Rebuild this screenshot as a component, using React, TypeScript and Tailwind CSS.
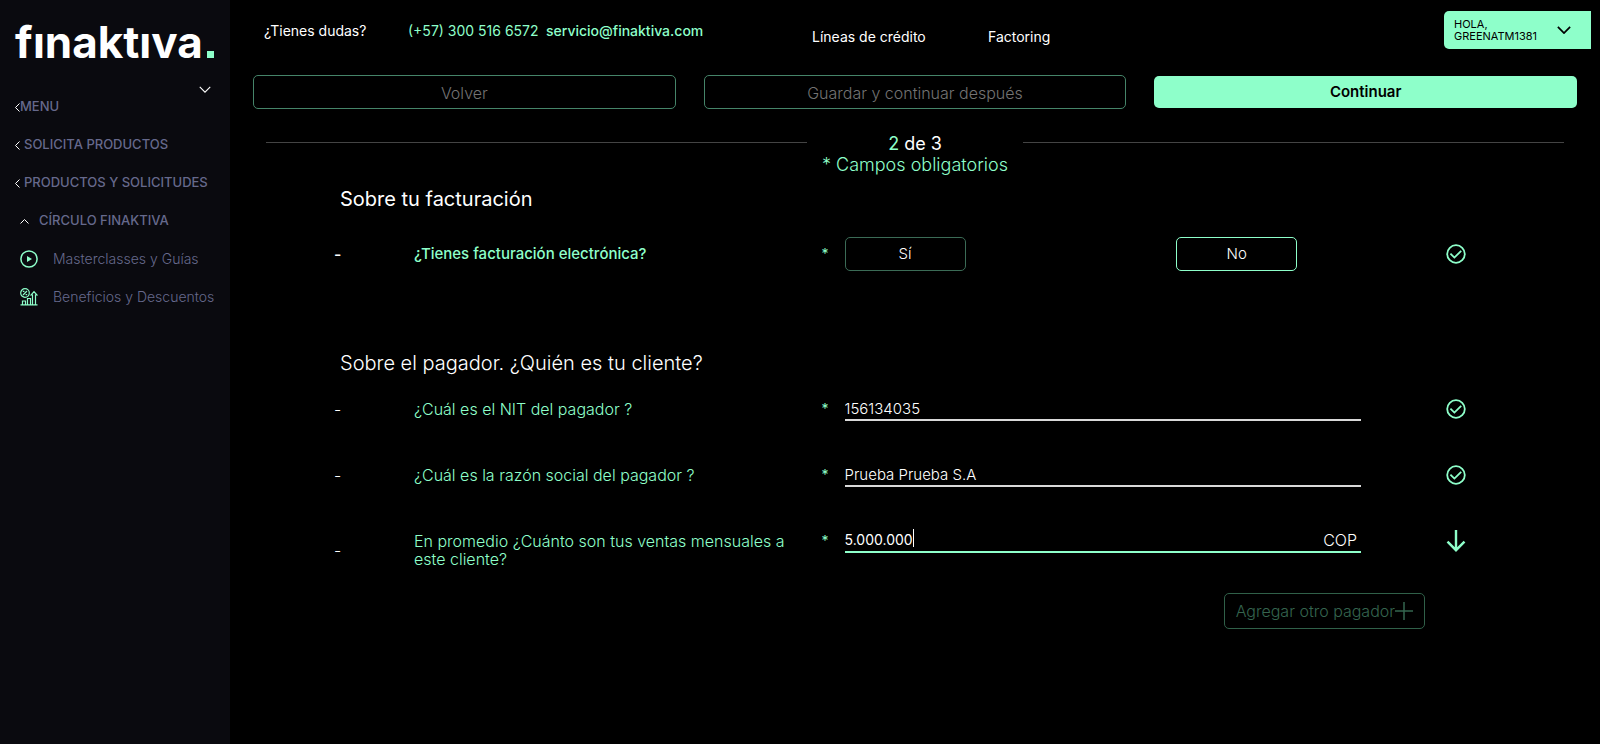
import { useState, type ReactNode } from 'react';

function Chevron({ className, d = 'M1 1l7 7 7-7', box = '0 0 16 9', w = 2 }: { className: string; d?: string; box?: string; w?: number }) {
  return (
    <svg className={className} viewBox={box} fill="none" stroke="currentColor" strokeWidth={w} aria-hidden="true">
      <path d={d} />
    </svg>
  );
}

function CheckIcon() {
  return (
    <svg className="h-5 w-5" viewBox="0 0 20 20" fill="none" stroke="currentColor" strokeWidth="1.8" aria-hidden="true">
      <circle cx="10" cy="10" r="8.8" />
      <path d="M4.400 9.600l4 4 6.800-6.800" />
    </svg>
  );
}

function ArrowDownIcon() {
  return (
    <svg className="h-[22px] w-5" viewBox="0 0 20 22" fill="none" stroke="currentColor" strokeWidth="2.4" aria-hidden="true">
      <path d="M10 0v20.200M1.500 11.600l8.500 8.600 8.500-8.600" />
    </svg>
  );
}

function PlayIcon() {
  return (
    <svg className="h-[18px] w-[18px]" viewBox="0 0 18 18" fill="none" stroke="currentColor" strokeWidth="1.5" aria-hidden="true">
      <circle cx="9" cy="9" r="8.1" />
      <path d="M7 6l5 3-5 3z" fill="currentColor" stroke="none" />
    </svg>
  );
}

function BenefitsIcon() {
  return (
    <svg className="h-[18px] w-[18px]" viewBox="0 0 18 18" fill="none" stroke="currentColor" strokeWidth="1.2" aria-hidden="true">
      <circle cx="5" cy="5" r="4.3" />
      <path d="M3 7l4-4M2.800 3.400h1.600M5.600 6.600h1.600M0.500 16.800h17M2.500 16.500v-3.500h3v3.500M7.500 16.500v-6h3v6M12.500 16.500V7h-1.400l2.900-3.400L16.900 7h-1.400v9.500" />
    </svg>
  );
}

function SideLink({ children }: { children: ReactNode }) {
  return (
    <a href="#" className="flex h-[38px] items-center gap-1 text-[13px] font-medium">
      <Chevron className="h-[9px] w-[5px] text-white" box="0 0 5 9" d="M4.500 .5l-4 4 4 4" w={1} />
      {children}
    </a>
  );
}

function Row({ label, id, done = true, bold = false, children }: { label: string; id: string; done?: boolean; bold?: boolean; children: ReactNode }) {
  return (
    <div className="grid grid-cols-[80px_408fr_23px_517fr_190px] items-start">
      <span className={bold ? 'self-center text-base font-medium text-white' : 'self-center text-base font-light text-white'}>-</span>
      <label
        id={`${id}-label`}
        htmlFor={id}
        className={bold ? 'py-[9px] pr-8 text-[15px] leading-[18px] font-medium' : 'py-[9px] pr-8 text-base leading-[18px] font-light'}
      >
        {label}
      </label>
      <span className="flex h-9 items-center text-sm">*</span>
      <div className="flex h-9 items-center">{children}</div>
      <span className="flex h-9 items-center justify-center">{done ? <CheckIcon /> : <ArrowDownIcon />}</span>
    </div>
  );
}

export default function App() {
  const [electronic, setElectronic] = useState(false);
  const choice = 'h-[34px] w-[121px] rounded-[5px] border text-[15px] font-light text-white';
  return (
    <div className="flex min-h-screen bg-black font-['Inter',sans-serif] text-[#8effca]">
      <aside className="flex w-[230px] shrink-0 flex-col bg-[#0a0a0f] px-[15px] text-[#66698c]">
        <a href="#" className="flex items-baseline gap-1 pt-[14px] text-[44px] leading-[56px] font-bold text-white">
          fınaktıva
          <span className="h-[7px] w-[7px] bg-[#8effca]" />
        </a>
        <button type="button" aria-label="Contraer" className="mt-4 mr-1 self-end text-white">
          <Chevron className="h-[7px] w-3" w={1.5} />
        </button>
        <nav className="flex flex-col">
          <a href="#" className="mb-[5px] flex h-[28px] items-center text-[13px] font-medium">
            <Chevron className="h-[9px] w-[5px] text-white" box="0 0 5 9" d="M4.500 .5l-4 4 4 4" w={1} />
            MENU
          </a>
          <SideLink>SOLICITA PRODUCTOS</SideLink>
          <SideLink>PRODUCTOS Y SOLICITUDES</SideLink>
          <a href="#" className="flex h-[38px] items-center gap-[10px] pl-[5px] text-[13px] font-medium">
            <Chevron className="h-[5px] w-[9px] text-white" box="0 0 9 5" d="M.5 4.500l4-4 4 4" w={1} />
            CÍRCULO FINAKTIVA
          </a>
          <a href="#" className="flex h-[38px] items-center gap-[15px] pl-[5px] text-sm font-light whitespace-nowrap">
            <span className="text-[#8effca]"><PlayIcon /></span>
            Masterclasses y Guías
          </a>
          <a href="#" className="flex h-[38px] items-center gap-[15px] pl-[5px] text-sm font-light whitespace-nowrap">
            <span className="text-[#8effca]"><BenefitsIcon /></span>
            Beneficios y Descuentos
          </a>
        </nav>
      </aside>

      <main className="min-w-0 flex-1">
        <header className="flex h-[75px] items-start pt-[11px] pr-[9px] pl-[34px] text-sm">
          <div className="flex flex-[548] pt-[10px]">
            <span className="w-[144px] text-white">¿Tienes dudas?</span>
            <a href="tel:+573005166572" className="w-[138px]">(+57) 300 516 6572</a>
            <a href="mailto:servicio@finaktiva.com" className="font-medium">servicio@finaktiva.com</a>
          </div>
          <nav className="flex flex-[632] pt-4 text-white">
            <a href="#" className="w-[176px]">Líneas de crédito</a>
            <a href="#">Factoring</a>
          </nav>
          <button type="button" className="flex h-[38px] w-[147px] items-center justify-between rounded-l-[5px] bg-[#8effca] pr-5 pl-[10px] text-left text-[11px] leading-3 text-black">
            <span>HOLA,<br />GREENATM1381</span>
            <Chevron className="h-2 w-[14px]" />
          </button>
        </header>

        <div className="grid grid-cols-3 items-center gap-7 px-[23px] text-base">
          <button type="button" className="h-[34px] rounded-[5px] border border-[#458469] pt-px font-light text-[#737373]">Volver</button>
          <button type="button" className="h-[34px] rounded-[5px] border border-[#458469] pt-px font-light text-[#737373]">Guardar y continuar después</button>
          <button type="button" className="h-8 rounded-[5px] bg-[#8effca] pt-px text-[15px] font-semibold text-black">Continuar</button>
        </div>

        <div className="flex items-start px-9 pt-[22px]">
          <hr className="mt-[11px] flex-1 border-[#444]" />
          <div className="w-[216px] pt-[2px] text-center">
            <p className="text-lg leading-[22px] text-white"><span className="text-[#8effca]">2</span> de 3</p>
            <p className="text-lg leading-5 font-light">* Campos obligatorios</p>
          </div>
          <hr className="mt-[11px] flex-1 border-[#444]" />
        </div>

        <form className="pr-[49px] pl-[104px]" onSubmit={(e) => e.preventDefault()}>
          <h2 className="mt-3 pl-[6px] text-xl leading-6 text-white">Sobre tu facturación</h2>
          <div className="mt-[25px]">
            <Row label="¿Tienes facturación electrónica?" id="electronic" bold>
              <div id="electronic" role="group" aria-labelledby="electronic-label" className="grid w-full grid-cols-[332fr_185fr]">
                <button type="button" onClick={() => setElectronic(true)} className={`${choice} ${electronic ? 'border-[#8effca]' : 'border-[#3b6b56]'}`}>Sí</button>
                <button type="button" onClick={() => setElectronic(false)} className={`${choice} ${electronic ? 'border-[#3b6b56]' : 'border-[#8effca]'}`}>No</button>
              </div>
            </Row>
          </div>

          <h2 className="mt-[79px] pl-[6px] text-xl leading-6 font-light text-white">Sobre el pagador. ¿Quién es tu cliente?</h2>
          <div className="mt-4 flex flex-col gap-[30px]">
            <Row label="¿Cuál es el NIT del pagador ?" id="nit">
              <input id="nit" defaultValue="156134035" className="h-6 w-full border-b-2 border-[#d9d9d9] bg-transparent text-[15px] font-light text-white outline-none" />
            </Row>
            <Row label="¿Cuál es la razón social del pagador ?" id="company">
              <input id="company" defaultValue="Prueba Prueba S.A" className="h-6 w-full border-b-2 border-[#d9d9d9] bg-transparent text-[15px] font-light text-white outline-none" />
            </Row>
            <Row label="En promedio ¿Cuánto son tus ventas mensuales a este cliente?" id="sales" done={false}>
              <div className="relative flex h-6 w-full items-center border-b-2 border-[#8effca] pr-1 text-white">
                <input id="sales" defaultValue="5.000.000" className="w-full min-w-0 flex-1 bg-transparent text-sm caret-transparent outline-none" />
                <span className="absolute top-0 left-[68px] h-[18px] w-px bg-white" />
                <span className="text-base font-light">COP</span>
              </div>
            </Row>
          </div>
          <div className="mt-4 flex justify-end pr-[126px]">
            <button type="button" className="flex h-9 items-center rounded-[5px] border border-[#306049] px-[11px] text-base font-light text-[#35654f]">
              Agregar otro pagador
              <svg className="h-[18px] w-[18px]" viewBox="0 0 18 18" stroke="currentColor" strokeWidth="1.5" aria-hidden="true">
                <path d="M9 0v18M0 9h18" />
              </svg>
            </button>
          </div>
        </form>
      </main>
    </div>
  );
}
